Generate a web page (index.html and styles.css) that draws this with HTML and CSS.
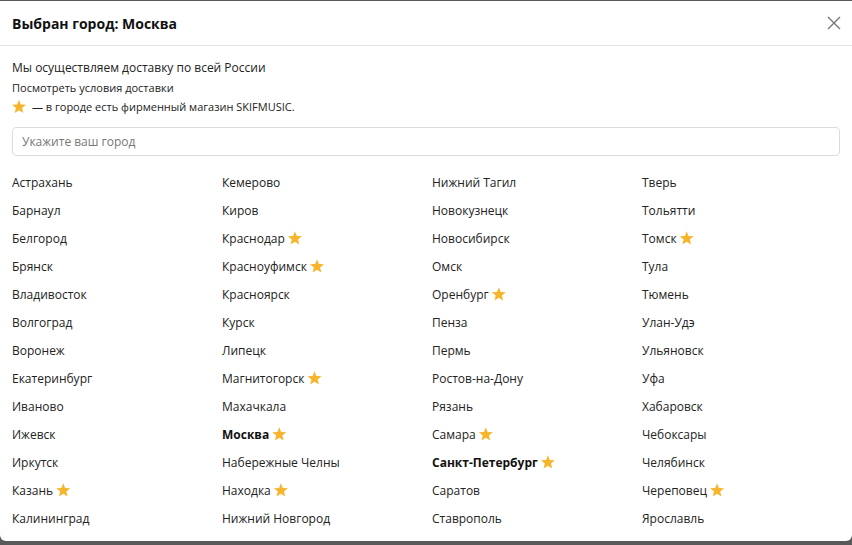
FILE: index.html
```html
<!DOCTYPE html>
<html lang="ru">
<head>
    <meta charset="UTF-8">
    <title>Выбор города</title>
    <link rel="stylesheet" href="styles.css">
</head>
<body>
    <div class="modal">
        <div class="modal-head">
            <h1>Выбран город: Москва</h1>
            <button class="close" aria-label="Закрыть">
                <svg width="14" height="14" viewBox="0 0 14 14"><path d="M1 1L13 13M13 1L1 13" stroke="#777" stroke-width="1.4" fill="none"/></svg>
            </button>
        </div>

        <div class="modal-body">
            <p class="lead">Мы осуществляем доставку по всей России</p>
            <p class="note"><a href="#">Посмотреть условия доставки</a></p>
            <p class="note"><span class="star"></span> — в городе есть фирменный магазин SKIFMUSIC.</p>

            <input class="search" type="text" placeholder="Укажите ваш город">

            <ul class="cities" id="cities"></ul>
        </div>
    </div>

    <script>
        // Список городов: [название, есть магазин, текущий]
        const cities = [
            ['Астрахань'], ['Кемерово'], ['Нижний Тагил'], ['Тверь'],
            ['Барнаул'], ['Киров'], ['Новокузнецк'], ['Тольятти'],
            ['Белгород'], ['Краснодар', 1], ['Новосибирск'], ['Томск', 1],
            ['Брянск'], ['Красноуфимск', 1], ['Омск'], ['Тула'],
            ['Владивосток'], ['Красноярск'], ['Оренбург', 1], ['Тюмень'],
            ['Волгоград'], ['Курск'], ['Пенза'], ['Улан-Удэ'],
            ['Воронеж'], ['Липецк'], ['Пермь'], ['Ульяновск'],
            ['Екатеринбург'], ['Магнитогорск', 1], ['Ростов-на-Дону'], ['Уфа'],
            ['Иваново'], ['Махачкала'], ['Рязань'], ['Хабаровск'],
            ['Ижевск'], ['Москва', 1, 1], ['Самара', 1], ['Чебоксары'],
            ['Иркутск'], ['Набережные Челны'], ['Санкт-Петербург', 1, 1], ['Челябинск'],
            ['Казань', 1], ['Находка', 1], ['Саратов'], ['Череповец', 1],
            ['Калининград'], ['Нижний Новгород'], ['Ставрополь'], ['Ярославль']
        ];

        const list = document.getElementById('cities');
        cities.forEach(([name, shop, bold]) => {
            const li = document.createElement('li');
            li.innerHTML = `<a href="#"${bold ? ' class="bold"' : ''}>${name}</a>` + (shop ? ' <span class="star"></span>' : '');
            list.appendChild(li);
        });
    </script>
</body>
</html>
```

FILE: styles.css
```css
body {
    margin: 0;
    height: 545px;
    overflow: hidden;
    background: #595959;
    font-family: "Open Sans", Arial, sans-serif;
    color: #222;
}
.modal {
    margin-top: 1px;
    height: 540px;
    background: #fff;
    border-radius: 0 0 6px 6px;
    overflow: hidden;
}
.modal-head {
    height: 44px;
    display: flex;
    align-items: center;
    justify-content: space-between;
    padding: 0 12px;
    border-bottom: 1px solid #e2e2e2;
}
.modal-head h1 {
    margin: 0;
    font-size: 14px;
    font-weight: 700;
    color: #111;
}
.close {
    border: none;
    background: none;
    padding: 0;
    margin-right: -1px;
    cursor: pointer;
    display: flex;
}
.modal-body {
    padding: 12px 12px 0;
}
.lead {
    margin: 0;
    font-size: 12px;
    line-height: 20px;
}
.note {
    margin: 0;
    font-size: 11px;
    line-height: 19px;
    display: flex;
    align-items: center;
}
.note a {
    color: #222;
    text-decoration: none;
}
.note .star {
    margin-right: 6px;
}
.star {
    display: inline-block;
    width: 14px;
    height: 14px;
    background: #f7b52c;
    clip-path: polygon(50% 2%, 63% 35%, 100% 38%, 72% 60%, 81% 96%, 50% 76%, 19% 96%, 28% 60%, 0% 38%, 37% 35%);
    vertical-align: -2px;
}
.search {
    display: block;
    box-sizing: border-box;
    width: 100%;
    height: 29px;
    margin-top: 11px;
    padding: 0 9px;
    border: 1px solid #dcdcdc;
    border-radius: 4px;
    font-family: inherit;
    font-size: 12px;
    color: #222;
}
.search::placeholder {
    color: #777;
}
.cities {
    list-style: none;
    margin: 17px 0 0;
    padding: 0;
    display: grid;
    grid-template-columns: repeat(4, 210px);
    grid-auto-rows: 28px;
}
.cities li {
    font-size: 12px;
    line-height: 20px;
}
.cities a {
    color: #222;
    text-decoration: none;
}
.cities a.bold {
    font-weight: 700;
    color: #111;
}
```
